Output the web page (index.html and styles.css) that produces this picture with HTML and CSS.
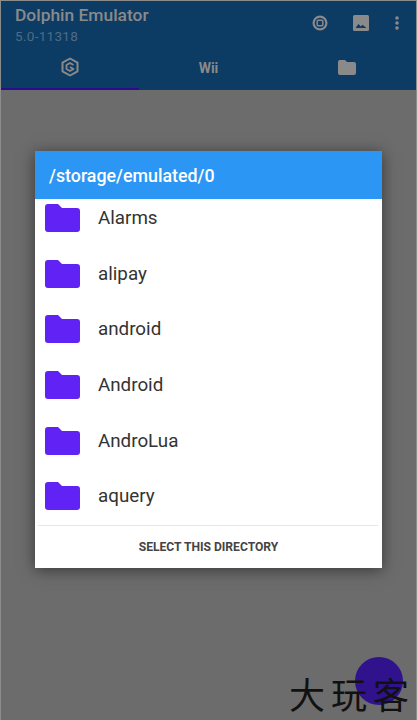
FILE: index.html
```html
<!DOCTYPE html>
<html lang="en">
<head>
    <meta charset="UTF-8">
    <meta name="viewport" content="width=device-width, initial-scale=1.0">
    <title>Dolphin Emulator</title>
    <link rel="stylesheet" href="styles.css">
</head>
<body>

    <!-- App bar behind the dialog -->
    <header class="appbar">
        <div class="toolbar">
            <div class="titles">
                <h1>Dolphin Emulator</h1>
                <p>5.0-11318</p>
            </div>
            <div class="actions">
                <svg width="16" height="16" viewBox="0 0 16 16"><circle cx="8" cy="8" r="6.400" fill="none" stroke="#8a8a8a" stroke-width="2.200" /><rect x="5.200" y="5.200" width="5.600" height="5.600" rx="1" fill="none" stroke="#8a8a8a" stroke-width="1.500"/></svg>
                <svg width="16" height="16" viewBox="0 0 16 16"><rect width="16" height="16" rx="1.500" fill="#8a8a8a"/><path d="M2.500 13l3-4 2.300 2.500 1.700-1.800 4 3.300z" fill="#0c3c64"/></svg>
                <svg width="6" height="14" viewBox="0 0 6 14"><circle cx="3" cy="2" r="1.800" fill="#8a8a8a"/><circle cx="3" cy="7" r="1.800" fill="#8a8a8a"/><circle cx="3" cy="12" r="1.800" fill="#8a8a8a"/></svg>
            </div>
        </div>
        <nav class="tabs">
            <div class="tab tab-active">
                <svg width="20" height="20" viewBox="0 0 20 20"><path d="M10 1.500l7.500 4.200v8.600L10 18.500l-7.500-4.200V5.700z" fill="none" stroke="#8a8a8a" stroke-width="2" stroke-linejoin="round"/><path d="M13.500 8L10 6 6.500 8v4l3.500 2 3.500-2-3.500-2" fill="none" stroke="#8a8a8a" stroke-width="1.800" stroke-linejoin="round"/></svg>
            </div>
            <div class="tab tab-label">Wii</div>
            <div class="tab">
                <svg width="18" height="15" viewBox="0 0 18 15"><path d="M2 0h5l2 2h7a2 2 0 0 1 2 2v9a2 2 0 0 1-2 2H2a2 2 0 0 1-2-2V2a2 2 0 0 1 2-2z" fill="#8a8a8a"/></svg>
            </div>
        </nav>
    </header>

    <!-- Directory picker -->
    <main class="backdrop">
        <div class="dialog">
            <div class="dialog-title">/storage/emulated/0</div>
            <ul class="dir-list">
                <li class="dir"><svg class="folder" viewBox="0 0 35 28"><path d="M3 0h10l4 4h15a3 3 0 0 1 3 3v18a3 3 0 0 1-3 3H3a3 3 0 0 1-3-3V3a3 3 0 0 1 3-3z"/></svg>Alarms</li>
                <li class="dir"><svg class="folder" viewBox="0 0 35 28"><path d="M3 0h10l4 4h15a3 3 0 0 1 3 3v18a3 3 0 0 1-3 3H3a3 3 0 0 1-3-3V3a3 3 0 0 1 3-3z"/></svg>alipay</li>
                <li class="dir"><svg class="folder" viewBox="0 0 35 28"><path d="M3 0h10l4 4h15a3 3 0 0 1 3 3v18a3 3 0 0 1-3 3H3a3 3 0 0 1-3-3V3a3 3 0 0 1 3-3z"/></svg>android</li>
                <li class="dir"><svg class="folder" viewBox="0 0 35 28"><path d="M3 0h10l4 4h15a3 3 0 0 1 3 3v18a3 3 0 0 1-3 3H3a3 3 0 0 1-3-3V3a3 3 0 0 1 3-3z"/></svg>Android</li>
                <li class="dir"><svg class="folder" viewBox="0 0 35 28"><path d="M3 0h10l4 4h15a3 3 0 0 1 3 3v18a3 3 0 0 1-3 3H3a3 3 0 0 1-3-3V3a3 3 0 0 1 3-3z"/></svg>AndroLua</li>
                <li class="dir"><svg class="folder" viewBox="0 0 35 28"><path d="M3 0h10l4 4h15a3 3 0 0 1 3 3v18a3 3 0 0 1-3 3H3a3 3 0 0 1-3-3V3a3 3 0 0 1 3-3z"/></svg>aquery</li>
            </ul>
            <div class="dialog-action">SELECT THIS DIRECTORY</div>
        </div>
    </main>

    <div class="fab"></div>
    <div class="watermark">大玩客</div>

</body>
</html>
```
FILE: styles.css
```css
/* Basic Reset */
* {
    margin: 0;
    padding: 0;
    box-sizing: border-box;
}
body {
    font-family: Roboto, sans-serif;
    background-color: #6c6c6c;
    width: 417px;
    height: 720px;
    overflow: hidden;
    position: relative;
    display: flex;
    flex-direction: column;
    border-top: 1px solid #8c8c8c;
    border-left: 1px solid #8c8c8c;
    border-right: 1px solid #8c8c8c;
}

/* App bar */
.appbar {
    background-color: #0c3c64;
    height: 89px;
    display: flex;
    flex-direction: column;
}
.toolbar {
    height: 47px;
    display: flex;
    justify-content: space-between;
    padding: 5px 16px 0 14px;
}
.titles h1 {
    font-size: 17.400px;
    line-height: 19px;
    font-weight: 500;
    color: #8a8a8a;
}
.titles p {
    font-size: 13.500px;
    line-height: 16px;
    margin-top: 3px;
    letter-spacing: 0.3px;
    color: #4f6b84;
}
.actions {
    display: flex;
    align-items: center;
    height: 16px;
    gap: 25px;
    margin-top: 9px;
}
.tabs {
    flex: 1;
    display: flex;
}
.tab {
    flex: 1;
    display: flex;
    align-items: center;
    justify-content: center;
    padding-bottom: 3px;
}
.tab-active {
    border-bottom: 2px solid #2a0c8c;
}
.tab-label {
    font-size: 14px;
    font-weight: 700;
    color: #8a8a8a;
}

/* Dialog */
.backdrop {
    flex: 1;
    display: flex;
    flex-direction: column;
    align-items: flex-start;
    padding: 61px 0 0 34px;
}
.dialog {
    width: 347px;
    height: 417px;
    background-color: #fff;
    box-shadow: 0 2px 14px rgba(0, 0, 0, 0.5);
    display: flex;
    flex-direction: column;
}
.dialog-title {
    height: 48px;
    background-color: #2b96f3;
    color: #fff;
    font-size: 17.800px;
    font-weight: 500;
    line-height: 50px;
    padding-left: 14px;
}
.dir-list {
    list-style: none;
    height: 327px;
    border-bottom: 1px solid #e6e6e6;
    margin: 0 4px 0 3px;
    overflow: hidden;
}
.dir {
    height: 55.700px;
    display: flex;
    align-items: center;
    gap: 18px;
    padding-left: 7px;
    font-size: 18.800px;
    color: #333;
}
.dir:first-child {
    margin-top: -9px;
}
.folder {
    width: 35px;
    height: 28px;
    fill: #6122f5;
    flex-shrink: 0;
}
.dialog-action {
    flex: 1;
    display: flex;
    align-items: center;
    justify-content: center;
    font-size: 12.100px;
    font-weight: 700;
    color: #444;
}

/* Overlays */
.fab {
    position: absolute;
    left: 354px;
    top: 656px;
    width: 48px;
    height: 48px;
    border-radius: 50%;
    background-color: #30128c;
}
.watermark {
    position: absolute;
    left: 288px;
    top: 667px;
    font-family: "Noto Sans CJK SC", sans-serif;
    font-size: 36px;
    letter-spacing: 6px;
    line-height: 50px;
    color: #111;
    white-space: nowrap;
}
```
